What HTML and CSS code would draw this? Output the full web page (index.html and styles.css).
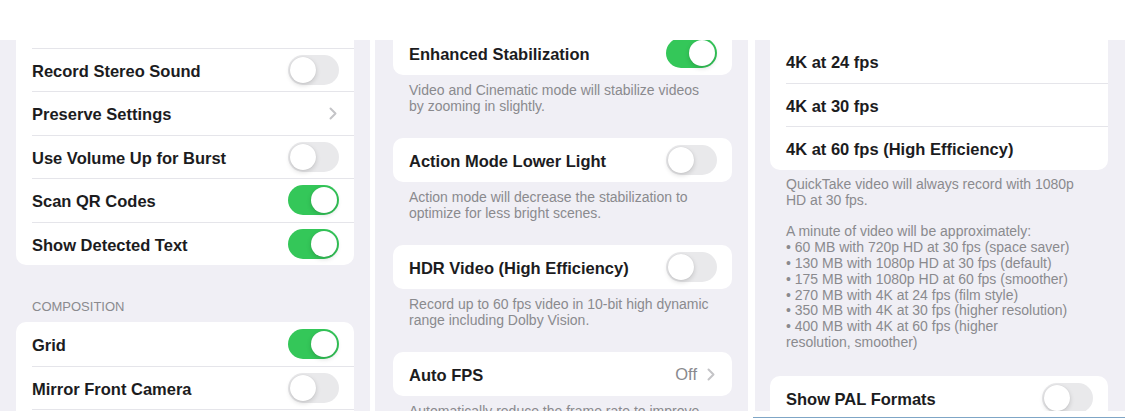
FILE: index.html
```html
<!DOCTYPE html>
<html lang="en">
<head>
<meta charset="utf-8">
<title>Camera settings</title>
<link rel="stylesheet" href="styles.css">
</head>
<body>
<div class="top"></div>
<div class="panels">
  <section class="panel p1">
    <div class="card first-cut">
      <div class="row"></div>
      <div class="row"><span class="label">Record Stereo Sound</span><span class="toggle"></span></div>
      <div class="row"><span class="label">Preserve Settings</span><svg class="chev" viewBox="0 0 8 13" width="8" height="13"><path d="M1.5 1.5L6.5 6.5L1.5 11.5"/></svg></div>
      <div class="row"><span class="label">Use Volume Up for Burst</span><span class="toggle"></span></div>
      <div class="row"><span class="label">Scan QR Codes</span><span class="toggle on"></span></div>
      <div class="row"><span class="label">Show Detected Text</span><span class="toggle on"></span></div>
    </div>
    <h3 class="header">COMPOSITION</h3>
    <div class="card">
      <div class="row"><span class="label">Grid</span><span class="toggle on"></span></div>
      <div class="row"><span class="label">Mirror Front Camera</span><span class="toggle"></span></div>
      <div class="row"></div>
    </div>
  </section>
  <section class="panel p2">
    <div class="card p2-first">
      <div class="row"><span class="label">Enhanced Stabilization</span><span class="toggle on"></span></div>
    </div>
    <p class="footer">Video and Cinematic mode will stabilize videos<br>by zooming in slightly.</p>
    <div class="card">
      <div class="row"><span class="label">Action Mode Lower Light</span><span class="toggle"></span></div>
    </div>
    <p class="footer">Action mode will decrease the stabilization to<br>optimize for less bright scenes.</p>
    <div class="card">
      <div class="row"><span class="label">HDR Video (High Efficiency)</span><span class="toggle"></span></div>
    </div>
    <p class="footer">Record up to 60 fps video in 10-bit high dynamic<br>range including Dolby Vision.</p>
    <div class="card">
      <div class="row"><span class="label">Auto FPS</span><span class="value">Off<svg class="chev" viewBox="0 0 8 13" width="8" height="13"><path d="M1.5 1.5L6.5 6.5L1.5 11.5"/></svg></span></div>
    </div>
    <p class="footer">Automatically reduce the frame rate to improve<br>low light video.</p>
  </section>
  <section class="panel p3">
    <div class="card p3-first">
      <div class="row"></div>
      <div class="row"><span class="label">4K at 24 fps</span></div>
      <div class="row"><span class="label">4K at 30 fps</span></div>
      <div class="row"><span class="label">4K at 60 fps (High Efficiency)</span></div>
    </div>
    <p class="footer long">QuickTake video will always record with 1080p<br>HD at 30 fps.<br><br>A minute of video will be approximately:<br>• 60 MB with 720p HD at 30 fps (space saver)<br>• 130 MB with 1080p HD at 30 fps (default)<br>• 175 MB with 1080p HD at 60 fps (smoother)<br>• 270 MB with 4K at 24 fps (film style)<br>• 350 MB with 4K at 30 fps (higher resolution)<br>• 400 MB with 4K at 60 fps (higher<br>resolution, smoother)</p>
    <div class="card">
      <div class="row"><span class="label">Show PAL Formats</span><span class="toggle"></span></div>
    </div>
  </section>
</div>
<div class="bottom"><div class="spacer"></div><div class="line"></div></div>
</body>
</html>
```
FILE: styles.css
```css
html, body {
  margin: 0;
  padding: 0;
  background: #ffffff;
}
body {
  width: 1125px;
  height: 418px;
  overflow: hidden;
  font-family: "Liberation Sans", Arial, sans-serif;
  color: #1c1c1e;
}
.top {
  height: 40px;
}
.panels {
  display: flex;
  height: 371px;
  overflow: hidden;
}
.panel {
  background: #f0eff5;
  height: 371px;
  overflow: hidden;
  box-sizing: border-box;
}
.p1 {
  width: 370px;
  padding: 0 16px;
}
.p2 {
  width: 373px;
  margin-left: 5px;
  padding: 0 16px 0 18px;
}
.p3 {
  width: 370px;
  margin-left: 7px;
  padding: 0 17px 0 15px;
}
.card {
  background: #ffffff;
  border-radius: 10px;
  overflow: hidden;
}
.first-cut {
  margin-top: -36px;
}
.p2-first {
  margin-top: -9.5px;
}
.p3-first {
  margin-top: -44.5px;
}
.row {
  height: 43.5px;
  margin-left: 16px;
  padding-right: 15px;
  display: flex;
  align-items: center;
  justify-content: space-between;
  box-sizing: border-box;
  border-top: 1px solid #e5e5ea;
}
.row:first-child {
  border-top: none;
}
.p2 .row {
  height: 44px;
}
.label {
  font-size: 16.5px;
  font-weight: 700;
  white-space: nowrap;
  padding-top: 3px;
}
.toggle {
  position: relative;
  width: 51px;
  height: 30px;
  border-radius: 15px;
  background: #e9e9eb;
  flex: none;
}
.toggle::after {
  content: "";
  position: absolute;
  top: 2px;
  left: 2px;
  width: 26px;
  height: 26px;
  border-radius: 50%;
  background: #ffffff;
  box-shadow: 0 2px 5px rgba(0, 0, 0, 0.16), 0 0 1px rgba(0, 0, 0, 0.12);
}
.toggle.on {
  background: #34c759;
}
.toggle.on::after {
  left: 23px;
}
.chev {
  fill: none;
  stroke: #c4c4c7;
  stroke-width: 2;
  stroke-linecap: round;
  stroke-linejoin: round;
  margin-right: 2px;
}
.value {
  display: flex;
  align-items: center;
  gap: 10px;
  font-size: 16.5px;
  color: #8a8a8e;
  padding-top: 2px;
}
.header {
  margin: 34px 0 7px 16px;
  font-size: 13px;
  line-height: 16px;
  font-weight: 400;
  color: #8a8a8e;
}
.footer {
  margin: 0;
  padding: 7px 0 23px 16px;
  font-size: 14px;
  line-height: 16.5px;
  color: #8a8a8e;
  white-space: nowrap;
}
.footer.long {
  padding: 7.5px 0 25px 16px;
  line-height: 15.8px;
}
.bottom {
  display: flex;
  height: 7px;
}
.spacer {
  width: 753px;
}
.line {
  flex: 1;
  border-bottom: 1px solid #7fa6c6;
}
```
